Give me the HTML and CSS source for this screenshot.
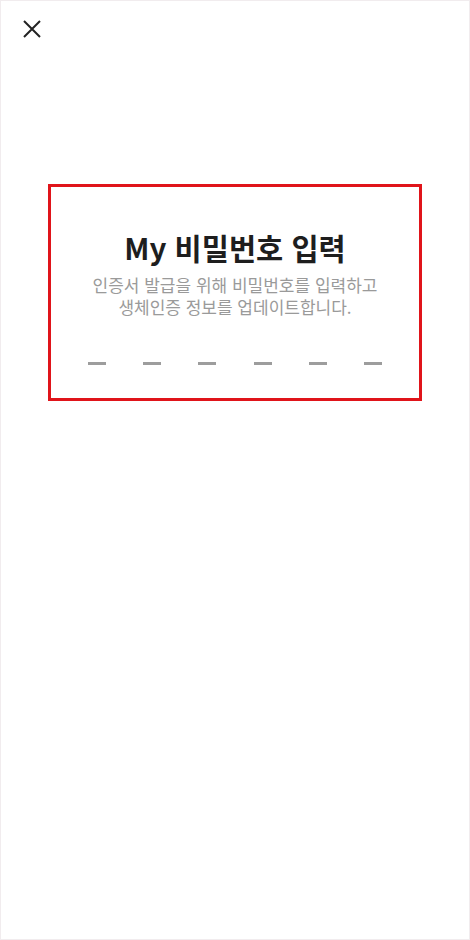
FILE: index.html
```html
<!DOCTYPE html>
<html lang="ko">
<head>
    <meta charset="UTF-8">
    <meta name="viewport" content="width=device-width, initial-scale=1.0">
    <title>My 비밀번호 입력</title>
    <link rel="stylesheet" href="styles.css">
</head>
<body>
    <div class="screen">
        <!-- Close button -->
        <header class="top-bar">
            <button type="button" class="close-button" aria-label="닫기">
                <svg width="20" height="20" viewBox="0 0 20 20">
                    <path d="M2 2 L18 18 M18 2 L2 18" stroke="#222" stroke-width="2" fill="none"/>
                </svg>
            </button>
        </header>

        <!-- PIN entry -->
        <section class="pin-box">
            <h1 class="pin-title">My 비밀번호 입력</h1>
            <p class="pin-desc">인증서 발급을 위해 비밀번호를 입력하고<br>생체인증 정보를 업데이트합니다.</p>
            <div class="pin-dots">
                <span class="pin-dash"></span>
                <span class="pin-dash"></span>
                <span class="pin-dash"></span>
                <span class="pin-dash"></span>
                <span class="pin-dash"></span>
                <span class="pin-dash"></span>
            </div>
        </section>
    </div>
</body>
</html>
```

FILE: styles.css
```css
* {
    box-sizing: border-box;
}

body {
    margin: 0;
    font-family: "Noto Sans CJK KR", "Noto Sans", sans-serif;
    background-color: #fff;
}

.screen {
    width: 470px;
    height: 940px;
    border: 1px solid #f1ecee;
    background: #fff;
}

.top-bar {
    height: 183px;
    padding: 18px 0 0 21px;
}

.close-button {
    background: none;
    border: none;
    padding: 0;
    width: 20px;
    height: 20px;
    cursor: pointer;
    display: block;
}

.close-button svg {
    display: block;
}

.pin-box {
    margin-left: 47px;
    width: 374px;
    height: 217px;
    border: 3px solid #e0141a;
    display: flex;
    flex-direction: column;
    align-items: center;
    padding-top: 40px;
}

.pin-title {
    margin: 0;
    font-size: 29.5px;
    font-weight: 700;
    color: #1e1e1e;
    line-height: 40px;
}

.pin-desc {
    margin: 7px 0 0;
    font-size: 17px;
    line-height: 22px;
    color: #9a9a9a;
    text-align: center;
}

.pin-dots {
    display: flex;
    justify-content: space-between;
    width: 294px;
    margin-top: 44px;
}

.pin-dash {
    width: 18px;
    height: 3px;
    background-color: #9d9d9d;
}
```
